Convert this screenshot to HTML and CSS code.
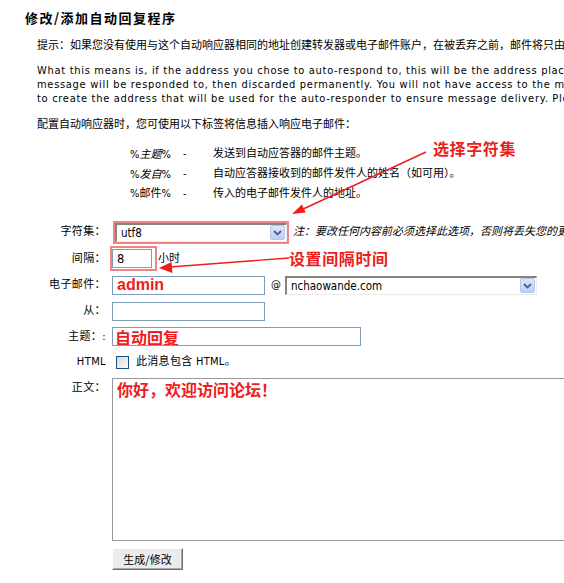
FILE: index.html
```html
<!DOCTYPE html>
<html lang="zh-CN">

<head>
    <meta charset="UTF-8">
    <meta name="viewport" content="width=device-width, initial-scale=1.0">
    <title>修改/添加自动回复程序</title>
    <link rel="stylesheet" href="styles.css">
</head>

<body>
    <div class="page">
        <h1 class="title">修改/添加自动回复程序</h1>

        <div class="intro">
            <p class="line hint">提示：如果您没有使用与这个自动响应器相同的地址创建转发器或电子邮件账户，在被丢弃之前，邮件将只由自动响应器处理。</p>
            <p class="line explain">What this means is, if the address you chose to auto-respond to, this will be the address placed on the outgoing reply. The<br>
                message will be responded to, then discarded permanently. You will not have access to the message. You may want<br>
                to create the address that will be used for the auto-responder to ensure message delivery. Please note this.</p>
            <p class="line config">配置自动响应器时，您可使用以下标签将信息插入响应电子邮件：</p>

            <div class="tags">
                <span class="tag">%<em>主题</em>%</span><span class="dash">-</span><span class="desc">发送到自动应答器的邮件主题。</span>
                <span class="tag">%<em>发自</em>%</span><span class="dash">-</span><span class="desc">自动应答器接收到的邮件发件人的姓名（如可用）。</span>
                <span class="tag">%邮件%</span><span class="dash">-</span><span class="desc">传入的电子邮件发件人的地址。</span>
            </div>
        </div>

        <form class="form">
            <label class="label">字符集：</label>
            <div class="field">
                <span class="mark mark-select">
                    <span class="select select-charset">
                        <span class="select-text">utf8</span>
                        <span class="select-btn"><svg width="9" height="6" viewBox="0 0 9 6"><path d="M1 1l3.5 3.5L8 1" fill="none" stroke="#4d6185" stroke-width="1.8"/></svg></span>
                    </span>
                </span>
                <span class="note">注：要改任何内容前必须选择此选项，否则将丢失您的更改。</span>
            </div>

            <label class="label">间隔：</label>
            <div class="field">
                <span class="mark mark-interval"><input class="input input-short" type="text" value="8"></span>
                <span class="unit">小时</span>
            </div>

            <label class="label">电子邮件：</label>
            <div class="field">
                <input class="input input-mid input-red" type="text" value="admin">
                <span class="at">@</span>
                <span class="select select-domain">
                    <span class="select-text">nchaowande.com</span>
                    <span class="select-btn"><svg width="9" height="6" viewBox="0 0 9 6"><path d="M1 1l3.5 3.5L8 1" fill="none" stroke="#4d6185" stroke-width="1.8"/></svg></span>
                </span>
            </div>

            <label class="label">从：</label>
            <div class="field">
                <input class="input input-mid" type="text" value="">
            </div>

            <label class="label">主题：:</label>
            <div class="field">
                <input class="input input-long input-red input-cjk" type="text" value="自动回复">
            </div>

            <label class="label">HTML</label>
            <div class="field">
                <span class="checkbox"></span>
                <span class="check-text">此消息包含 HTML。</span>
            </div>

            <label class="label label-top">正文：</label>
            <div class="field">
                <div class="textarea">你好，欢迎访问论坛！</div>
            </div>

            <span></span>
            <div class="field">
                <button class="button" type="button">生成/修改</button>
            </div>
        </form>
    </div>

    <!-- red hand-drawn hints on top of the form -->
    <span class="callout callout-charset">选择字符集</span>
    <span class="callout callout-interval">设置间隔时间</span>
    <svg class="arrows" width="564" height="583" viewBox="0 0 564 583">
        <line x1="426" y1="152" x2="300" y2="210.5" stroke="#ee1c1c" stroke-width="1.4"/>
        <polygon points="292,214 305.7,212.6 301.9,204.4" fill="#ee1c1c"/>
        <line x1="289" y1="258" x2="170" y2="267" stroke="#ee1c1c" stroke-width="1.4"/>
        <polygon points="159,268 172.4,273 171.6,262" fill="#ee1c1c"/>
    </svg>
</body>

</html>
```

FILE: styles.css
```css
html,
body {
    margin: 0;
    padding: 0;
    width: 564px;
    height: 583px;
    overflow: hidden;
    background-color: #fff;
}

body {
    position: relative;
    font-family: "DejaVu Sans Condensed", "Noto Sans CJK SC", sans-serif;
    font-stretch: condensed;
    font-size: 11px;
    line-height: 14px;
    color: #000;
}

.page {
    padding-left: 25px;
}

.title {
    margin: 10px 0 0;
    font-family: "Noto Sans CJK SC", sans-serif;
    font-size: 13px;
    line-height: 16px;
    letter-spacing: 1.5px;
    font-weight: bold;
}

.intro {
    padding-left: 12px;
}

.line {
    margin: 0;
    white-space: nowrap;
}

.hint {
    margin-top: 13px;
}

.explain {
    margin-top: 11px;
    letter-spacing: 0.7px;
}

.config {
    margin-top: 12px;
}

/* tag list: %tag% - description */
.tags {
    display: grid;
    grid-template-columns: 53px 30px auto;
    grid-auto-rows: 20px;
    align-items: center;
    margin: 12px 0 0 93px;
    white-space: nowrap;
}

.tags em {
    font-family: "Noto Sans CJK SC", sans-serif;
}

/* form rows */
.form {
    display: grid;
    grid-template-columns: 81px auto;
    grid-template-rows: 26px 27px 26px 26px 25px 26px auto auto;
    column-gap: 6px;
    align-items: center;
    margin-top: 15px;
}

.label {
    text-align: right;
    white-space: nowrap;
    letter-spacing: 0.4px;
}

.label-top {
    align-self: start;
    padding-top: 6px;
}

.field {
    display: flex;
    align-items: center;
    white-space: nowrap;
}

.mark {
    display: inline-flex;
    border: 2px solid #ef8484;
}

.mark-select {
    margin-left: 1px;
}

.mark-interval {
    margin-left: -2px;
    padding: 1px 3px 1px 0;
}

.input {
    box-sizing: border-box;
    height: 19px;
    margin: 0;
    padding: 0 4px;
    border: 1px solid #7f9db9;
    background: #fff;
    font-family: "DejaVu Sans", sans-serif;
    font-size: 11.5px;
    color: #000;
    outline: none;
}

.input-short {
    width: 40px;
}

.input-mid {
    width: 153px;
}

.input-long {
    width: 249px;
}

.input-red {
    font-family: "Liberation Sans", sans-serif;
    font-size: 16px;
    font-weight: bold;
    color: #ee1c1c;
}

.input-cjk {
    font-family: "Noto Sans CJK SC", sans-serif;
    padding: 0 2px;
}

.unit {
    margin-left: 1px;
}

.at {
    margin: 0 4px 0 6px;
    font-family: "DejaVu Sans", sans-serif;
}

.select {
    box-sizing: border-box;
    display: inline-flex;
    align-items: center;
    justify-content: space-between;
    height: 19px;
    border-style: solid;
    border-width: 2px 1px 1px 2px;
    border-color: #84847c #ecece6 #ecece6 #84847c;
    background: #fff;
    font-family: "DejaVu Sans", sans-serif;
    font-size: 11.5px;
}

.select-charset {
    width: 172px;
}

.select-domain {
    width: 252px;
}

.select-text {
    padding-left: 4px;
}

.select-btn {
    box-sizing: border-box;
    display: flex;
    align-items: center;
    justify-content: center;
    width: 15px;
    height: 15px;
    margin-right: 1px;
    border: 1px solid #b6c6ee;
    border-radius: 2px;
    background: linear-gradient(#dbe6ff, #bccdf8);
}

.note {
    margin-left: 4px;
    font-style: italic;
}

.checkbox {
    box-sizing: border-box;
    width: 13px;
    height: 13px;
    margin: 0 7px 0 4px;
    border: 1px solid #1c5180;
    background: linear-gradient(135deg, #d8d8d2, #fbfbfa);
}

.check-text {
    letter-spacing: 0.3px;
}

.textarea {
    box-sizing: border-box;
    width: 470px;
    height: 163px;
    margin-top: 3px;
    padding: 0 4px;
    border: 1px solid #999;
    font-family: "Noto Sans CJK SC", sans-serif;
    font-size: 16px;
    line-height: 20px;
    font-weight: bold;
    color: #ee1c1c;
}

.button {
    width: 71px;
    height: 22px;
    margin-top: 7px;
    padding: 0;
    border: 1px solid;
    border-color: #fff #707070 #707070 #fff;
    box-shadow: inset -1px -1px #a8a8a8;
    background-color: #ececec;
    font-family: "Noto Sans CJK SC", sans-serif;
    font-size: 11px;
    color: #000;
}

/* annotations */
.callout {
    position: absolute;
    font-family: "Noto Sans CJK SC", sans-serif;
    font-size: 16px;
    line-height: 18px;
    letter-spacing: 0.6px;
    font-weight: bold;
    color: #ee1c1c;
    white-space: nowrap;
}

.callout-charset {
    left: 433px;
    top: 139px;
}

.callout-interval {
    left: 289px;
    top: 249px;
}

.arrows {
    position: absolute;
    left: 0;
    top: 0;
    pointer-events: none;
}
```
